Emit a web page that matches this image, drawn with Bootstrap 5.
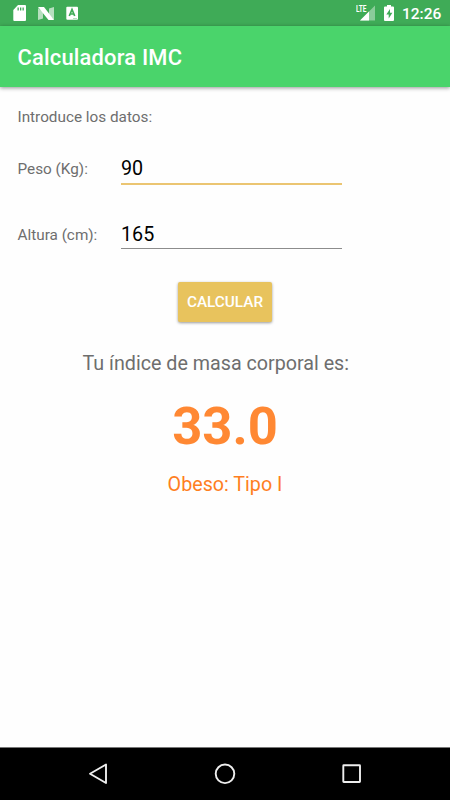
<!DOCTYPE html>
<html lang="es">
<head>
<meta charset="utf-8">
<meta name="viewport" content="width=device-width, initial-scale=1">
<title>Calculadora IMC</title>
<link href="https://cdn.jsdelivr.net/npm/bootstrap@5.3.0/dist/css/bootstrap.min.css" rel="stylesheet">
<style>
body{font-family:Roboto,"Open Sans",sans-serif;font-size:15.3px;line-height:20px;color:#6e6e6e;background:#fefefe;height:800px;overflow:hidden}
.status-bar{height:26px;background:#3fab57;padding:0 9px 0 13px}
.status-bar svg{display:block}
.clock{font-size:15.5px;font-weight:500;line-height:26px;padding-top:1px;width:39px;white-space:nowrap}
.app-bar{height:61px;background:#4ad46b;box-shadow:0 1px 4px rgba(0,0,0,.42);padding:3px 17.5px 0}
.app-title{font-size:21.9px;font-weight:500;line-height:26px;color:#fff;letter-spacing:.2px}
.content{padding:20px 17.5px 0}
.field-row{height:31px;margin-top:33px}
.field-row.first-row{height:32px;margin-top:26px}
.field-label{width:103.5px;padding-top:6px;white-space:nowrap}
.field-row .form-control{width:221px;height:100%;border:0;border-radius:0;background:transparent;font-size:19.7px;line-height:28px;color:#000;box-shadow:none}
.field-row .line-active{border-bottom:2px solid #ebc572;padding:0}
.field-row .line-idle{border-bottom:1px solid #8c8c8c;padding:2px 0 0}
.second-row .field-label{padding-top:7px}
.calc-row{margin-top:33px}
.btn-calc{width:94px;height:40px;padding:1px 0 0;border:0;border-radius:2px;background:#e8c35d;color:#fff;font-size:15.3px;font-weight:500;box-shadow:0 1px 3px rgba(0,0,0,.4)}
.btn-calc:hover{background:#e0b94f;color:#fff}
.result-label{font-size:19.7px;line-height:24px;margin:30px 0 0 65px;white-space:nowrap}
.result-value{font-size:52.5px;font-weight:700;line-height:60px;color:#ff8833;margin-top:20px}
.result-kind{font-size:19.7px;line-height:24px;color:#ff7f1f;margin-top:17px}
.system-nav{height:53px;background:#000;border-top:1px solid #777}
</style>
<script src="https://cdn.jsdelivr.net/npm/bootstrap@5.3.0/dist/js/bootstrap.bundle.min.js"></script>
</head>
<body class="d-flex flex-column">
<div class="status-bar d-flex align-items-center justify-content-between text-white flex-shrink-0">
  <svg width="66" height="26" viewBox="13 0 66 26" aria-hidden="true">
    <path fill="#fff" fill-rule="evenodd" d="M18 5h7a1 1 0 0 1 1 1v14a1 1 0 0 1-1 1H14.300a1 1 0 0 1-1-1V10ZM17.500 7.500v3h1.300v-3ZM20 7.500v3h1.300v-3ZM22.500 7.500v3h1.300v-3Z"/>
    <path fill="#fff" opacity=".62" d="M38 8l5 4v6.500l-5 1.500ZM49 8.500L54 7v13l-5-4.500Z"/>
    <path fill="#fff" d="M38 7h6l10 13h-5.500Z"/>
    <rect x="66.300" y="6.800" width="11.700" height="13" rx="1" fill="#fff"/>
    <path fill="none" stroke="#3fab57" stroke-width="1.700" d="M69.300 16L72 9.500l2.700 6.500M70 14h4"/>
    <path stroke="#b5dfbe" d="M73 18.500h4"/>
  </svg>
  <div class="d-flex">
    <svg width="46" height="26" viewBox="356 0 46 26" aria-hidden="true">
      <path fill="#fff" opacity=".4" d="M375 5.500V20.500H360Z"/>
      <path fill="#3fab57" d="M355 4h12.500v9H355Z"/>
      <path fill="#fff" d="M369 11.500v9h-9Z"/>
      <text x="356" y="12" font-size="9" font-weight="700" fill="#fff" textLength="10.500" lengthAdjust="spacingAndGlyphs">LTE</text>
      <path fill="#fff" fill-rule="evenodd" d="M387 5h4v1.500h2a1 1 0 0 1 1 1V20a1 1 0 0 1-1 1h-8a1 1 0 0 1-1-1V7.500a1 1 0 0 1 1-1h2ZM390 9l-3.700 5.500h2.400V18.500l3.700-5.700H390Z"/>
    </svg>
    <div class="clock">12:26</div>
  </div>
</div>
<header class="app-bar d-flex align-items-center flex-shrink-0">
  <h1 class="app-title m-0">Calculadora IMC</h1>
</header>
<main class="content flex-grow-1">
  <p class="m-0">Introduce los datos:</p>
  <div class="field-row first-row d-flex">
    <label class="field-label" for="peso">Peso (Kg):</label>
    <input class="form-control line-active" id="peso" type="text" value="90">
  </div>
  <div class="field-row second-row d-flex">
    <label class="field-label" for="altura">Altura (cm):</label>
    <input class="form-control line-idle" id="altura" type="text" value="165">
  </div>
  <div class="calc-row d-flex justify-content-center"><button class="btn btn-calc" type="button">CALCULAR</button></div>
  <p class="result-label">Tu índice de masa corporal es:</p>
  <div class="result-value text-center">33.0</div>
  <div class="result-kind text-center">Obeso: Tipo I</div>
</main>
<nav class="system-nav flex-shrink-0" aria-label="Sistema">
  <svg class="d-block" width="450" height="52" viewBox="0 748 450 52" fill="none" stroke="#eee" stroke-width="1.900" stroke-linejoin="round" aria-hidden="true">
    <path d="M106 764.500v18.500L90 773.800Z"/>
    <circle cx="225" cy="773.800" r="9.300"/>
    <rect x="343.300" y="765.300" width="16.700" height="16.700" rx=".5"/>
  </svg>
</nav>
</body>
</html>
